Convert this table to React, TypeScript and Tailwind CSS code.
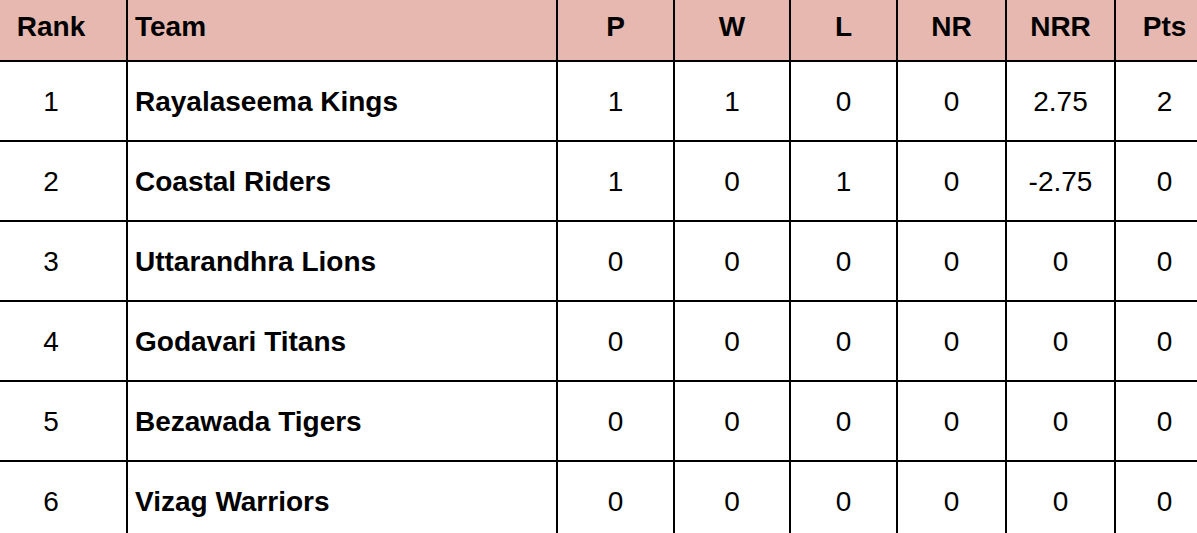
import React from "react";

const rows = [
  { rank: "1", team: "Rayalaseema Kings", p: "1", w: "1", l: "0", nr: "0", nrr: "2.75", pts: "2" },
  { rank: "2", team: "Coastal Riders", p: "1", w: "0", l: "1", nr: "0", nrr: "-2.75", pts: "0" },
  { rank: "3", team: "Uttarandhra Lions", p: "0", w: "0", l: "0", nr: "0", nrr: "0", pts: "0" },
  { rank: "4", team: "Godavari Titans", p: "0", w: "0", l: "0", nr: "0", nrr: "0", pts: "0" },
  { rank: "5", team: "Bezawada Tigers", p: "0", w: "0", l: "0", nr: "0", nrr: "0", pts: "0" },
  { rank: "6", team: "Vizag Warriors", p: "0", w: "0", l: "0", nr: "0", nrr: "0", pts: "0" },
];

export default function App() {
  return (
    <div className="w-[1197px] h-[533px] overflow-hidden bg-white text-black font-['Liberation_Sans',Arial,sans-serif]">
      <div className="-ml-[24px] w-[1237px]">
        {/* Header */}
        <div className="flex h-[62px] border-b-2 border-black bg-[#e6b8af] text-[28px] font-bold">
          <div className="w-[150px] flex items-center justify-center pb-[6px]">Rank</div>
          <div className="w-[430px] border-l-2 border-black flex items-center pl-[7px] pb-[6px]">Team</div>
          <div className="w-[117px] border-l-2 border-black flex items-center justify-center pb-[6px]">P</div>
          <div className="w-[116px] border-l-2 border-black flex items-center justify-center pb-[6px]">W</div>
          <div className="w-[107px] border-l-2 border-black flex items-center justify-center pb-[6px]">L</div>
          <div className="w-[109px] border-l-2 border-black flex items-center justify-center pb-[6px]">NR</div>
          <div className="w-[109px] border-l-2 border-black flex items-center justify-center pb-[6px]">NRR</div>
          <div className="w-[99px] border-l-2 border-black flex items-center justify-center pb-[6px]">Pts</div>
        </div>
        {rows.map((r) => (
          <div key={r.rank} className="flex h-[80px] border-b-2 border-black text-[28px]">
            <div className="w-[150px] flex items-center justify-center pt-[2px]">{r.rank}</div>
            <div className="w-[430px] border-l-2 border-black flex items-center pl-[7px] pt-[2px] font-bold">{r.team}</div>
            <div className="w-[117px] border-l-2 border-black flex items-center justify-center pt-[2px]">{r.p}</div>
            <div className="w-[116px] border-l-2 border-black flex items-center justify-center pt-[2px]">{r.w}</div>
            <div className="w-[107px] border-l-2 border-black flex items-center justify-center pt-[2px]">{r.l}</div>
            <div className="w-[109px] border-l-2 border-black flex items-center justify-center pt-[2px]">{r.nr}</div>
            <div className="w-[109px] border-l-2 border-black flex items-center justify-center pt-[2px]">{r.nrr}</div>
            <div className="w-[99px] border-l-2 border-black flex items-center justify-center pt-[2px]">{r.pts}</div>
          </div>
        ))}
      </div>
    </div>
  );
}
